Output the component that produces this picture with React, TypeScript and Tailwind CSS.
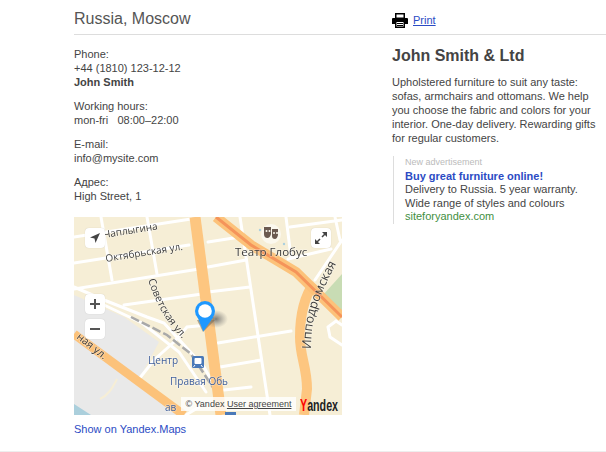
const linkCls = 'text-[#2b4bc4]'

function PrintIcon() {
  return (
    <svg width="16" height="15" viewBox="0 0 16 15" className="shrink-0">
      <path d="M3 0h10v5H3z M1 5h14a1 1 0 0 1 1 1v5h-3V8H3v3H0V6a1 1 0 0 1 1-1z" fill="#000" />
      <rect x="4.5" y="1.5" width="7" height="3" fill="#fff" />
      <rect x="3" y="8" width="10" height="7" fill="#000" />
      <rect x="4.5" y="9" width="7" height="4.5" fill="#fff" />
      <rect x="5" y="10" width="6" height="1" fill="#000" />
      <rect x="5" y="12" width="6" height="1" fill="#000" />
    </svg>
  )
}

function MapDrawing() {
  const label = { fontFamily: '"Open Sans", sans-serif', fontSize: 10, fill: '#3d3d3d', stroke: '#fff', strokeOpacity: 0.35, strokeWidth: 1.5, paintOrder: 'stroke' as const }
  const blue = { ...label, fill: '#40609c' }
  return (
    <svg width="268" height="198" viewBox="0 0 268 198" className="block blur-[0.3px]">
      <defs>
        <path id="sov" d="M74 63 C82 85 90 105 115 128" />
        <path id="ipp" d="M237 132 C237 105 241 85 266 40" />
        <radialGradient id="shade">
          <stop offset="0" stopColor="#555" stopOpacity="0.75" />
          <stop offset="1" stopColor="#777" stopOpacity="0" />
        </radialGradient>
      </defs>
      <rect width="268" height="198" fill="#f6eed6" />

      <polygon points="268,57 249,78 268,98" fill="#c8dcb4" />
      <polygon points="0,78 50,100 85,125 65,162 113,198 0,198" fill="#e9e9e9" />
      <polygon points="0,187 17,198 0,198" fill="#abcfdc" />
      <path d="M43 162 C38 172 34 178 26 182" stroke="#f6eed6" strokeWidth="2" fill="none" />

      <g stroke="#fff" strokeWidth="3" fill="none" strokeLinecap="round">
        <path d="M0 20 L117 2" />
        <path d="M0 46 L115 28" />
        <path d="M0 72 L125 52" />
        <path d="M50 88 L128 77" />
        <path d="M27 0 L38 63" />
        <path d="M73 0 L83 57" />
        <path d="M134 25 L166 20" />
        <path d="M134 50 L172 43" />
        <path d="M134 75 L176 70" />
        <path d="M166 0 L196 198" />
        <path d="M216 10 L268 3" />
        <path d="M214 42 L257 32" />
        <path d="M212 0 L217 40" />
        <path d="M261 0 L266 23" />
        <path d="M268 23 L241 63" />
        <path d="M144 126 L217 114" />
        <path d="M146 150 L187 143" />
        <path d="M150 173 L177 170" />
        <path d="M65 162 L80 143 L100 125 L113 110 L134 108" />
        <path d="M0 70 L30 83 L73 100 L90 106 L130 150 L142 172 L148 198" />
        <path d="M30 88 L68 106 L105 135 L132 175" />
        <path d="M254 110 L262 104 L268 108 M254 110 L256 120 L268 128" />
        <path d="M112 198 L125 190" />
      </g>
      <path d="M57 100 L93 118 L117 137 L140 172" stroke="#a9a9a9" strokeWidth="2.5" strokeDasharray="9 3" fill="none" />

      <g fill="none">
        <path d="M0 117 L110 198" stroke="#fcc27a" strokeWidth="9" />
        <path d="M121 0 L147 198" stroke="#fdc680" strokeWidth="11" />
        <path d="M240 66 C230 80 226 100 226 120 C226 140 233 150 233 172 L230 198" stroke="#fdc680" strokeWidth="10" />
        <path d="M142 0 L177 28 L222 55 L268 100" stroke="#fcc27a" strokeWidth="10" />
        <path d="M142 0 L177 28 L222 55 L268 100" stroke="#f5945a" strokeWidth="3" />
      </g>

      <circle cx="197" cy="17" r="10" fill="#fbf8ee" />
      <path d="M190 10 h7 v7 q-1 4 -3.5 4 q-3.5 0 -3.5 -4z M198 12 h6 v6 q-1 4 -3 4 q-3 0 -3 -3z" fill="#6b5a50" />
      <circle cx="192.500" cy="14" r="1" fill="#fbf8ee" />
      <circle cx="195.500" cy="14" r="1" fill="#fbf8ee" />
      <circle cx="200" cy="16" r="1" fill="#fbf8ee" />
      <circle cx="203" cy="16" r="1" fill="#fbf8ee" />
      <circle cx="186" cy="13" r="1.2" fill="#a9cfe0" />
      <circle cx="210" cy="27" r="1.2" fill="#a9cfe0" />

      <text x="30" y="21" transform="rotate(-9 30 21)" {...label}>Чаплыгина</text>
      <text x="32" y="45" transform="rotate(-9 32 45)" {...label}>Октябрьская ул.</text>
      <text {...label} fontSize="10.5"><textPath href="#sov">Советская ул.</textPath></text>
      <text {...label} fontSize="12.5"><textPath href="#ipp">Ипподромская</textPath></text>
      <text x="2" y="121" transform="rotate(38 2 121)" {...label} fontSize="10.5">ная ул.</text>
      <text x="161" y="39" {...label} fontSize="11.5">Театр Глобус</text>
      <text x="74" y="147" {...blue}>Центр</text>
      <text x="96" y="168" {...blue}>Правая Обь</text>
      <text x="91" y="194" {...blue}>ав</text>

      <rect x="118" y="139" width="12" height="12" rx="1.5" fill="#4a79b8" />
      <rect x="120.5" y="141" width="7" height="6" rx="1" fill="#fff" />
      <path d="M121 148 l-1.5 2 M127 148 l1.5 2" stroke="#fff" strokeWidth="1" />
      <rect x="151" y="195" width="11" height="3" fill="#4a79b8" />

      <ellipse cx="142" cy="102" rx="12" ry="9" fill="url(#shade)" />
      <path d="M123 103 L129 115 L141 103 Z" fill="#7d705a" fillOpacity="0.6" />
      <path d="M123.500 100 L129.300 114.500 L139.500 100 Z" fill="#1e98ff" />
      <circle cx="131" cy="94" r="10" fill="#1e98ff" />
      <circle cx="131" cy="94" r="6.800" fill="#fff" />
    </svg>
  )
}

function MapButton({ className, children }: { className: string; children: React.ReactNode }) {
  return (
    <div className={`absolute w-5 h-5 rounded-sm bg-white flex items-center justify-center shadow-[0_0_1px_rgba(0,0,0,0.2)] ${className}`}>
      {children}
    </div>
  )
}

function YandexMap() {
  return (
    <div className="relative w-[268px] h-[198px] overflow-hidden">
      <MapDrawing />
      <MapButton className="left-[11px] top-[11px]">
        <svg width="12" height="12" viewBox="0 0 12 12"><path d="M11 1 L1 5.500 L5.500 6.500 L6.500 11 Z" fill="#444" /></svg>
      </MapButton>
      <MapButton className="left-[237px] top-[11px]">
        <svg width="14" height="14" viewBox="0 0 14 14">
          <path d="M8 1h5v5z M1 8v5h5z" fill="#444" />
          <path d="M11 3 L8 6 M3 11 L6 8" stroke="#444" strokeWidth="1.500" />
        </svg>
      </MapButton>
      <MapButton className="left-[11px] top-[77px]">
        <svg width="12" height="12" viewBox="0 0 12 12"><path d="M5 1h2v4h4v2H7v4H5V7H1V5h4z" fill="#555" /></svg>
      </MapButton>
      <MapButton className="left-[11px] top-[102px]">
        <svg width="12" height="12" viewBox="0 0 12 12"><rect x="1" y="5" width="10" height="2" fill="#555" /></svg>
      </MapButton>
      <div className="absolute left-[107px] top-[180px] w-[115px] h-[14px] bg-white/80 flex items-center justify-center text-[9px] text-[#444] whitespace-nowrap">
        © Yandex&nbsp;<span className="underline">User agreement</span>
      </div>
      <svg width="42" height="24" viewBox="0 0 42 24" className="absolute left-[226px] top-[174px]">
        <text transform="translate(0 20) scale(0.63 1)" fontFamily='"Liberation Sans", sans-serif' fontSize="17" fontWeight="700" fill="#222">
          <tspan fill="#f00">Y</tspan>andex
        </text>
      </svg>
    </div>
  )
}

export default function App() {
  return (
    <div className="h-[452px] w-[606px] overflow-hidden bg-white font-['Liberation_Sans',Arial,sans-serif] text-[11px] leading-[14px] text-[#444]">
      <div className="h-[451px] pl-[74px]">
        <div className="flex h-[35px] border-b border-[#ddd]">
          <div className="w-[318px] pt-[10px] text-[16px] leading-[18px] text-[#555]">Russia, Moscow</div>
          <div className="flex items-start gap-[5px] pt-[13px]">
            <PrintIcon />
            <a className={`${linkCls} underline`}>Print</a>
          </div>
        </div>

        <div className="flex">
          <div className="w-[318px] pt-[12px]">
            <div className="flex flex-col gap-[10px]">
              <div>
                <div>Phone:</div>
                <div>+44 (1810) 123-12-12</div>
                <div className="font-bold">John Smith</div>
              </div>
              <div>
                <div>Working hours:</div>
                <div className="whitespace-pre">mon-fri   08:00–22:00</div>
              </div>
              <div>
                <div>E-mail:</div>
                <div>info@mysite.com</div>
              </div>
              <div>
                <div>Адрес:</div>
                <div>High Street, 1</div>
              </div>
            </div>
            <div className="mt-[14px]">
              <YandexMap />
            </div>
            <a className={`${linkCls} block mt-[7px]`}>Show on Yandex.Maps</a>
          </div>

          <div className="w-[214px] pt-[12px]">
            <h1 className="text-[16px] leading-[18px] font-bold text-[#444]">John Smith &amp; Ltd</h1>
            <p className="mt-[10px] text-[#444]">
              Upholstered furniture to suit any taste: sofas, armchairs and ottomans. We help you choose the fabric and colors for your interior. One-day delivery. Rewarding gifts for regular customers.
            </p>
            <div className="mt-[11px] ml-[1px] w-[200px] border-l border-[#ddd] pl-[11px] leading-[13.5px]">
              <div className="text-[9px] text-[#bbb]">New advertisement</div>
              <a className={`${linkCls} block font-bold`}>Buy great furniture online!</a>
              <div>Delivery to Russia. 5 year warranty.</div>
              <div>Wide range of styles and colours</div>
              <div className="text-[#3f8f3f]">siteforyandex.com</div>
            </div>
          </div>
        </div>
      </div>
      <div className="h-px bg-[#eee]" />
    </div>
  )
}
